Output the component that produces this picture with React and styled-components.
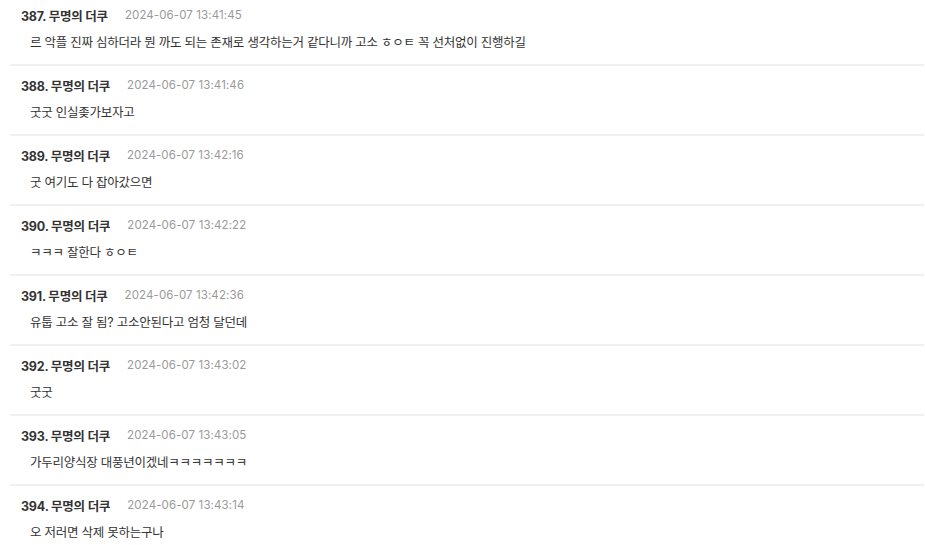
import React from "react";
import styled, { createGlobalStyle } from "styled-components";

const GlobalStyle = createGlobalStyle`
  html, body {
    margin: 0;
    padding: 0;
    background: #ffffff;
  }
  body {
    font-family: Inter, "Noto Sans CJK KR", sans-serif;
    overflow: hidden;
  }
`;

const List = styled.div`
  margin-top: -4px;
  padding: 0 1px 0 10px;
`;

const Comment = styled.div`
  padding: 9px 0 11px 11px;
  border-bottom: 2px solid #f0f0f0;
`;

const Header = styled.div`
  display: flex;
  align-items: center;
  height: 20px;
`;

const Author = styled.span`
  font-size: 12.5px;
  font-weight: 700;
  letter-spacing: -0.2px;
  color: #333333;
`;

const Date = styled.span`
  margin-left: 17px;
  font-size: 11.5px;
  letter-spacing: 0.1px;
  color: #9a9a9a;
`;

const Body = styled.div`
  margin-top: 8px;
  padding-left: 9px;
  line-height: 20px;
  font-size: 12.5px;
  letter-spacing: -0.25px;
  color: #333333;
`;

const comments = [
  { no: 387, date: "2024-06-07 13:41:45", text: "르 악플 진짜 심하더라 뭔 까도 되는 존재로 생각하는거 같다니까 고소 ㅎㅇㅌ 꼭 선처없이 진행하길" },
  { no: 388, date: "2024-06-07 13:41:46", text: "굿굿 인실좆가보자고" },
  { no: 389, date: "2024-06-07 13:42:16", text: "굿 여기도 다 잡아갔으면" },
  { no: 390, date: "2024-06-07 13:42:22", text: "ㅋㅋㅋ 잘한다 ㅎㅇㅌ" },
  { no: 391, date: "2024-06-07 13:42:36", text: "유툽 고소 잘 됨? 고소안된다고 엄청 달던데" },
  { no: 392, date: "2024-06-07 13:43:02", text: "굿굿" },
  { no: 393, date: "2024-06-07 13:43:05", text: "가두리양식장 대풍년이겠네ㅋㅋㅋㅋㅋㅋㅋ" },
  { no: 394, date: "2024-06-07 13:43:14", text: "오 저러면 삭제 못하는구나" },
];

function App() {
  return (
    <>
      <GlobalStyle />
      <List>
        {comments.map((c) => (
          <Comment key={c.no}>
            <Header>
              <Author>{c.no}. 무명의 더쿠</Author>
              <Date>{c.date}</Date>
            </Header>
            <Body>{c.text}</Body>
          </Comment>
        ))}
      </List>
    </>
  );
}

export default App;
